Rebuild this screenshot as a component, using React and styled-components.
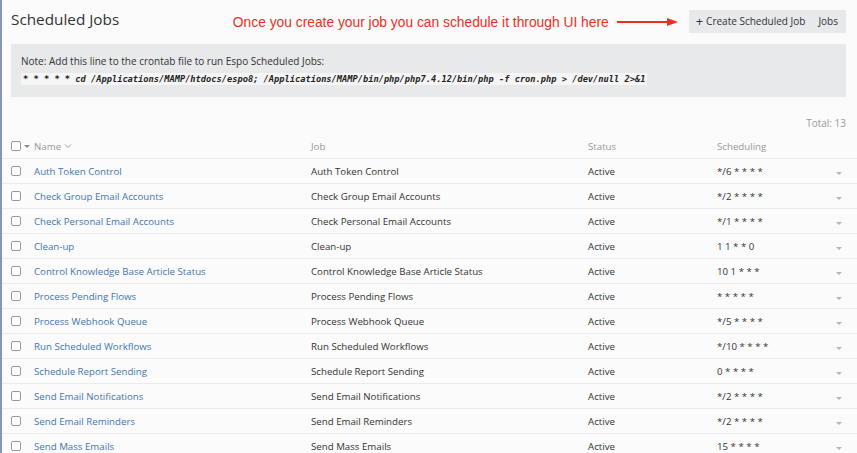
import React from 'react'
import styled, { createGlobalStyle } from 'styled-components'

const Global = createGlobalStyle`
  html, body { margin:0; padding:0; }
  body {
    background:#fbfbfb;
    font-family:"Open Sans", "Noto Sans", sans-serif;
    color:#333;
  }
`

const Page = styled.div`
  min-height:453px;
  border-left:2px solid #8696b6;
  box-sizing:border-box;
`

const Header = styled.div`
  display:flex;
  align-items:center;
  padding:9px 11px 0 9px;
  height:24px;
`

const Title = styled.h1`
  margin:-5px 0 0 0;
  font-size:15.3px;
  font-weight:400;
  color:#333;
`

const Annotation = styled.div`
  display:flex;
  align-items:center;
  margin-left:auto;
  margin-right:10px;
  color:#ee2e24;
  font-family:"Liberation Sans", Arial, sans-serif;
  font-size:13.8px;
  gap:7px;
  padding-top:2px;
`

const ButtonGroup = styled.div`
  display:flex;
  background:#e8e9ea;
  height:23px;
  align-items:center;
`

const Btn = styled.button`
  border:none;
  background:none;
  font-family:"Open Sans", sans-serif;
  font-size:10px;
  color:#333;
  padding:0 ${p => p.$tight ? '8px' : '6px'} 0 7px;
  height:100%;
  display:flex;
  align-items:center;
  gap:3px;
`

const Plus = styled.span`
  font-size:13px;
  line-height:10px;
  margin-top:-1px;
`

const Note = styled.div`
  margin:11px 11px 0 9px;
  background:#e7e9ea;
  padding:10px;
  height:33px;
  font-size:10px;
  color:#333;
`

const NoteLine = styled.div`
  line-height:14px;
`

const Code = styled.code`
  display:inline-block;
  margin-top:5px;
  background:#f5f5f5;
  padding:0 2px;
  font-family:"DejaVu Sans Mono", monospace;
  font-weight:700;
  font-style:italic;
  font-size:8.7px;
  line-height:12px;
  color:#222;
`

const Total = styled.div`
  text-align:right;
  font-size:10px;
  color:#999;
  padding:19px 11px 0 0;
  height:10px;
`

const Row = styled.div`
  display:grid;
  grid-template-columns:23px 277px 277px 129px 1fr 14px;
  align-items:center;
  height:25px;
  padding:0 7px 0 9px;
  border-bottom:1px solid #ebebeb;
  box-sizing:border-box;
  font-size:9.7px;
  color:${p => p.$head ? '#999' : '#333'};
`

const Rows = styled.div`
  margin-top:8px;
`

const CheckCell = styled.div`
  display:flex;
  align-items:center;
  gap:3px;
`

const Box = styled.span`
  width:10px;
  height:10px;
  border:1px solid #9a9a9a;
  border-radius:2px;
  background:#fff;
  box-sizing:border-box;
  display:inline-block;
`

const Caret = styled.span`
  width:0;
  height:0;
  border-left:3px solid transparent;
  border-right:3px solid transparent;
  border-top:3px solid ${p => p.$light ? '#b5b5b5' : '#888'};
  display:inline-block;
`

const Link = styled.a`
  color:#3f75ae;
  text-decoration:none;
`

const Cell = styled.div`
  white-space:nowrap;
`

const Sort = styled.span`
  display:inline-flex;
  align-items:center;
  gap:3px;
`

const jobs = [
  ['Auth Token Control', '*/6 * * * *'],
  ['Check Group Email Accounts', '*/2 * * * *'],
  ['Check Personal Email Accounts', '*/1 * * * *'],
  ['Clean-up', '1 1 * * 0'],
  ['Control Knowledge Base Article Status', '10 1 * * *'],
  ['Process Pending Flows', '* * * * *'],
  ['Process Webhook Queue', '*/5 * * * *'],
  ['Run Scheduled Workflows', '*/10 * * * *'],
  ['Schedule Report Sending', '0 * * * *'],
  ['Send Email Notifications', '*/2 * * * *'],
  ['Send Email Reminders', '*/2 * * * *'],
  ['Send Mass Emails', '15 * * * *'],
]

const Arrow = () => (
  <svg width="63" height="10" viewBox="0 0 63 10">
    <line x1="1" y1="5" x2="53" y2="5" stroke="#ee2e24" strokeWidth="2" />
    <polygon points="51,1 62,5 51,9" fill="#ee2e24" />
  </svg>
)

const Chevron = () => (
  <svg width="8" height="6" viewBox="0 0 8 6">
    <polyline points="1,1.5 4,4.5 7,1.5" fill="none" stroke="#999" strokeWidth="1" />
  </svg>
)

const App = () => {
  return (
    <Page>
      <Global />
      <Header>
        <Title>Scheduled Jobs</Title>
        <Annotation>
          Once you create your job you can schedule it through UI here
          <Arrow />
        </Annotation>
        <ButtonGroup>
          <Btn><Plus>+</Plus> Create Scheduled Job</Btn>
          <Btn $tight>Jobs</Btn>
        </ButtonGroup>
      </Header>
      <Note>
        <NoteLine>Note: Add this line to the crontab file to run Espo Scheduled Jobs:</NoteLine>
        <Code>* * * * * cd /Applications/MAMP/htdocs/espo8; /Applications/MAMP/bin/php/php7.4.12/bin/php -f cron.php &gt; /dev/null 2&gt;&amp;1</Code>
      </Note>
      <Total>Total: 13</Total>
      <Rows>
        <Row $head>
          <CheckCell><Box /><Caret /></CheckCell>
          <Cell><Sort>Name <Chevron /></Sort></Cell>
          <Cell>Job</Cell>
          <Cell>Status</Cell>
          <Cell>Scheduling</Cell>
          <Cell />
        </Row>
        {jobs.map(([name, cron]) => (
          <Row key={name}>
            <CheckCell><Box /></CheckCell>
            <Cell><Link href="#">{name}</Link></Cell>
            <Cell>{name}</Cell>
            <Cell>Active</Cell>
            <Cell>{cron}</Cell>
            <Cell><Caret $light /></Cell>
          </Row>
        ))}
      </Rows>
    </Page>
  )
}

export default App
